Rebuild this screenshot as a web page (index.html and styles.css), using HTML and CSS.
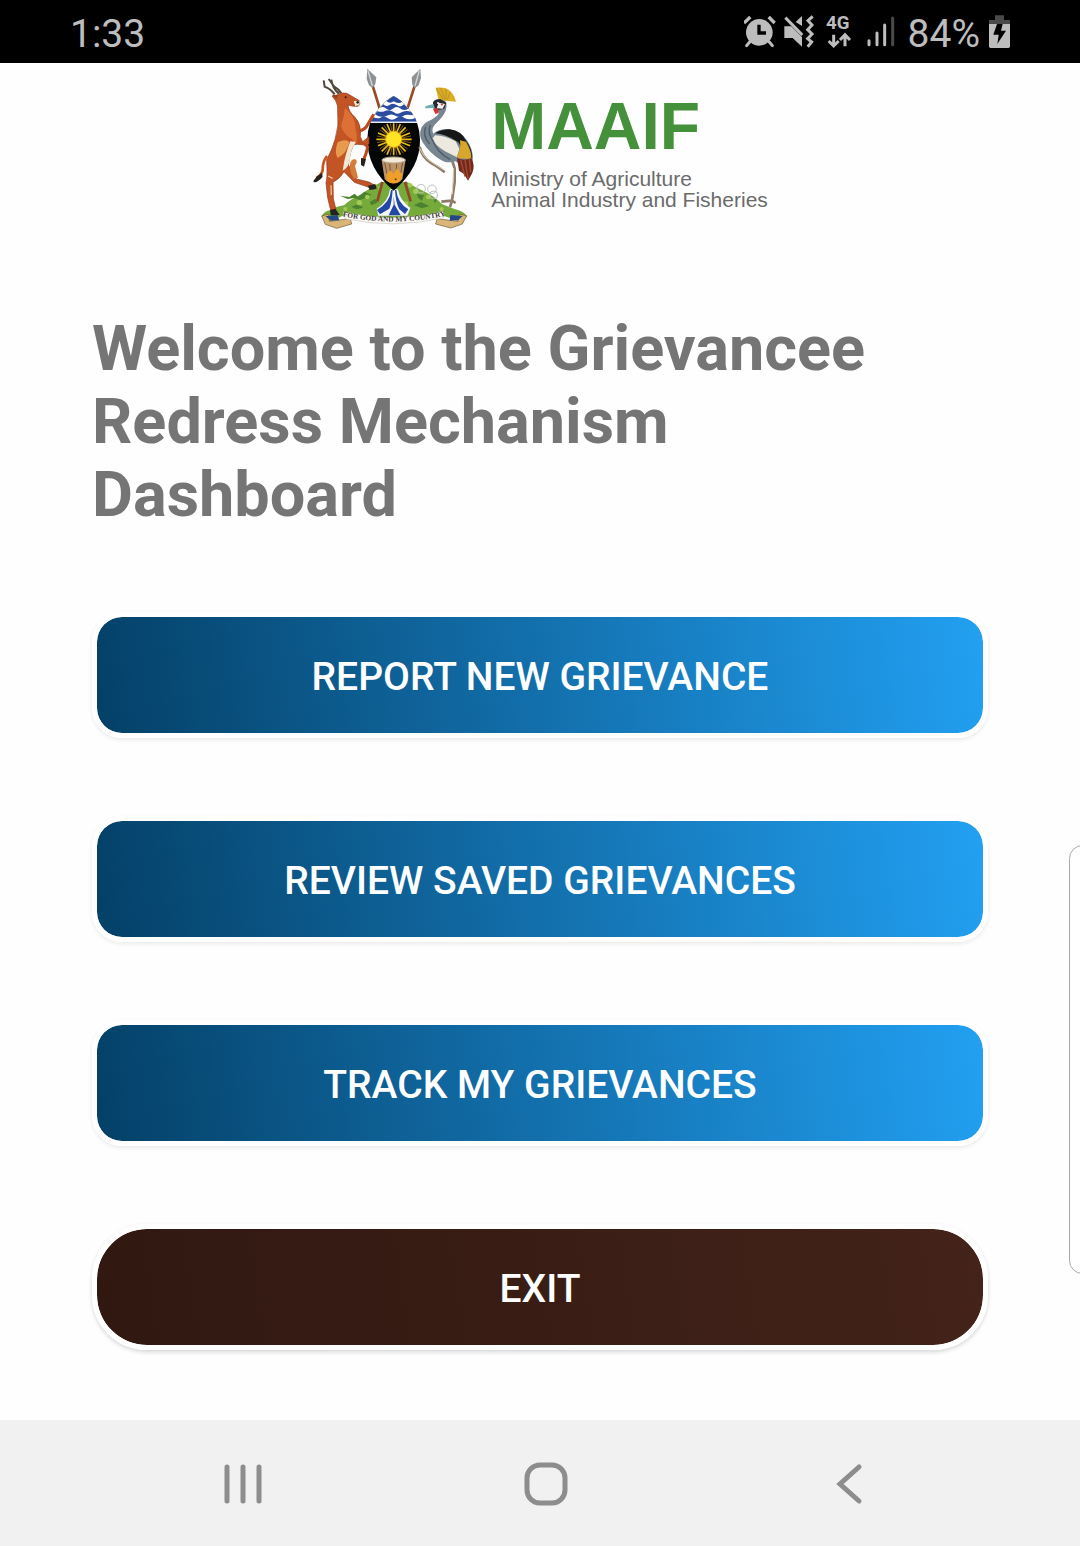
FILE: index.html
```html
<!DOCTYPE html>
<html lang="en">
<head>
<meta charset="utf-8">
<meta name="viewport" content="width=device-width, initial-scale=1">
<title>MAAIF Grievance Redress Mechanism</title>
<link rel="stylesheet" href="styles.css">
</head>
<body>
<div class="screen">
  <div class="status">
    <span class="status-text">1:33</span>
    <div class="status-icons">
      <svg width="32" height="63" viewBox="41 0 96 189" aria-hidden="true">
        <path d="M58 126L49 137M117 126L126 137" stroke="#bdbdbd" stroke-width="9" stroke-linecap="round"/>
        <path d="M41 69L60 51M115 51L133 69" stroke="#bdbdbd" stroke-width="10"/>
        <circle cx="87" cy="97" r="40" fill="#bdbdbd"/>
        <path d="M86 74V99H107" fill="none" stroke="#000" stroke-width="10"/>
      </svg>
      <svg width="32" height="63" viewBox="161 0 96 189" aria-hidden="true">
        <path d="M162 79H183L215 111V140L187 114H162ZM215 48V78L196 66Z" fill="#bdbdbd"/>
        <path d="M165 53L216 105" stroke="#bdbdbd" stroke-width="9"/>
        <path d="M247 49L233 62L245 75L232 89L245 102L232 116L244 126L232 140" fill="none" stroke="#bdbdbd" stroke-width="9"/>
      </svg>
      <svg width="28" height="63" viewBox="281 0 84 189" aria-label="4G">
        <text class="network" x="287" y="88">4G</text>
        <path d="M310 104V138M295 123L310 138L325 123M344 139V105M329 120L344 104L359 120" fill="none" stroke="#bdbdbd" stroke-width="9"/>
      </svg>
      <svg width="40" height="63" viewBox="389 0 120 189" aria-hidden="true">
        <path d="M416 122V134M440 99V134M463 75V134" stroke="#bdbdbd" stroke-width="9" stroke-linecap="round"/>
        <path d="M487 54V134" stroke="#4a4a4a" stroke-width="9" stroke-linecap="round"/>
      </svg>
      <span class="status-text">84%</span>
      <svg width="22" height="63" viewBox="774 0 66 189" aria-hidden="true">
        <path d="M795 46H822V60H840V74H777V60H795Z" fill="#4a4a4a"/>
        <path d="M777 72H840V139Q840 144 835 144H782Q777 144 777 139Z" fill="#bdbdbd"/>
        <path d="M801 72H818L813 92H828L802 132L806 104H790Z" fill="#000"/>
      </svg>
    </div>
  </div>

  <header class="brand">
    <svg class="emblem" width="190" height="174" viewBox="0 3 570 522" role="img" aria-label="Coat of arms of Uganda">
      <!-- spears -->
      <g stroke="#9a4a24" stroke-width="8">
        <path d="M216 65L247 165M346 65L316 160M247 360L232 418M315 360L332 418"/>
      </g>
      <path d="M202 20L229 46L226 66L218 78L207 70L200 50ZM361 20L335 46L337 68L344 79L356 70L363 48Z" fill="#8d9193"/>
      <path d="M204 26L217 72M358 26L345 72" stroke="#d4d7d8" stroke-width="4"/>

      <!-- mound -->
      <path d="M65 461Q74 446 94 444Q106 434 132 430Q150 413 184 397Q208 378 244 360H322Q346 378 375 389Q406 405 426 426Q458 440 480 446Q496 452 501 464L482 479L430 461Q280 488 132 460L82 482Z" fill="#76aa3b"/>
      <g fill="#4c8130">
        <path d="M120 401L148 405L164 395L174 405L193 389L214 398L196 408L180 414L162 408L143 411ZM350 395L372 400L366 416L355 408ZM209 420L226 410L232 422L214 430Z"/>
        <path d="M341 430L362 420L388 432L366 439ZM154 434L174 426L190 437L169 442ZM398 409L411 414L405 424Z"/>
      </g>
      <g fill="#a2ca56">
        <circle cx="202" cy="405" r="7"/><circle cx="178" cy="422" r="8"/><circle cx="347" cy="388" r="8"/>
        <circle cx="330" cy="370" r="7"/><circle cx="385" cy="405" r="7"/><circle cx="318" cy="425" r="7"/>
        <circle cx="136" cy="441" r="6"/><circle cx="425" cy="441" r="6"/><circle cx="240" cy="378" r="6"/>
      </g>
      <path d="M247 360L232 418M315 360L332 418" stroke="#934528" stroke-width="8"/>
      <g fill="none" stroke="#bfc4be" stroke-width="3">
        <circle cx="363" cy="380" r="13"/><circle cx="396" cy="382" r="13"/><circle cx="401" cy="399" r="12"/>
      </g>
      <!-- river -->
      <path d="M270 382H294Q299 415 331 438L322 461H235L230 440Q265 420 270 382Z" fill="#f5f7fb"/>
      <path d="M273 384Q271 420 231 444L240 457L268 440Q275 425 278 384ZM289 384Q292 422 325 442L315 456L298 442Q287 422 285 384ZM281 402V428L266 460H302L284 428Z" fill="#2347a5"/>

      <!-- scroll -->
      <path d="M65 462L86 456L88 478L151 470L155 486L110 499L76 487ZM500 461L478 457L474 478L411 470L407 486L452 498L487 486Z" fill="#d9b579" stroke="#6d592f" stroke-width="2"/>
      <path d="M76 463L94 476L118 475L112 459ZM488 462L474 475L449 476L451 459Z" fill="#234884"/>
      <path d="M130 450Q280 485 432 448L430 468Q280 502 135 470Z" fill="#fcfbf7" stroke="#c9c6bd" stroke-width="2"/>
      <path id="motto-line" d="M133 464Q281 494 432 462" fill="none"/>
      <text class="motto"><textPath href="#motto-line" startOffset="50%" text-anchor="middle">FOR GOD AND MY COUNTRY</textPath></text>

      <!-- shield -->
      <path d="M281 102Q311 119 331 146Q358 178 360 232Q362 317 281 386Q201 320 202 232Q203 180 231 146Q250 119 281 102Z" fill="#050606"/>
      <path d="M281 102Q311 119 331 146Q345 161 350 180H214Q220 160 231 146Q250 119 281 102Z" fill="#fff"/>
      <path d="M259 117Q270 108 281 102Q292 108 307 119Q295 127 281 118Q270 127 259 117ZM240 137L250 127Q260 137 272 127Q281 122 291 130Q302 138 312 127L325 140Q311 149 300 139Q290 131 281 139Q269 150 257 139Q249 132 240 137ZM225 157L232 148Q247 151 253 148Q266 141 281 150Q291 160 306 150Q319 144 333 149L340 160Q324 157 315 159Q300 171 283 160Q271 154 259 162Q242 169 225 157ZM216 174L220 166Q232 170 239 168Q252 160 263 168Q276 178 289 168Q303 159 315 169Q329 175 346 168L349 179H216Z" fill="#2c4c9f"/>
      <path d="M212 181H351" stroke="#e8edf5" stroke-width="4"/>
      <!-- sun -->
      <g stroke="#e9b81d" stroke-width="5">
        <path d="M281 184V280M229 232H335M245 196L317 268M245 268L317 196M261 186L301 278M301 186L261 278M234 213L330 251M234 251L330 213"/>
      </g>
      <g stroke="#b6871b" stroke-width="2">
        <path d="M271 184L291 280M291 184L271 280M231 222L333 242M231 242L333 222M252 190L310 274M310 190L252 274M239 203L323 261M239 261L323 203"/>
      </g>
      <circle cx="281" cy="232" r="24" fill="#fde425" stroke="#e8ac13" stroke-width="3"/>
      <!-- drum -->
      <path d="M245 293L254 352Q280 376 307 352L317 293Z" fill="#bd9366"/>
      <path d="M254 302L263 345M269 305L272 340M290 305L288 340M308 302L300 345" stroke="#765640" stroke-width="3"/>
      <path d="M259 336L270 325L281 337L291 319L306 337L302 357Q280 373 260 356Z" fill="#efa028"/>
      <ellipse cx="281" cy="294" rx="35" ry="9" fill="#f2ead9" stroke="#baa78d" stroke-width="3"/>
      <circle cx="287" cy="352" r="3" fill="#5f3d20"/>

      <!-- kob -->
      <path d="M104 97Q91 79 74 74L71 55M117 95Q98 82 94 53M124 94Q116 81 102 73L86 51" fill="none" stroke="#50483b" stroke-width="6"/>
      <path d="M107 101Q119 91 140 94Q155 102 178 116Q183 129 173 133Q158 134 144 129Q145 148 165 166Q185 187 181 224L188 239L207 224V247L187 248Q172 246 161 248L151 273L145 309Q159 325 169 351L207 360L224 370L222 382L198 373L163 361Q150 347 132 329Q122 348 99 361L100 410L108 443L93 449L83 407L78 363Q82 348 81 321L80 293Q96 265 105 233Q118 190 113 150Q115 130 107 116L96 102Z" fill="#c35424" stroke="#8b3519" stroke-width="2"/>
      <path d="M135 137Q167 165 166 200Q176 228 165 245L157 232Q131 218 123 191Q133 164 135 137Z" fill="#dd7135"/>
      <path d="M113 241Q137 229 148 240Q140 275 113 288Q102 270 113 241Z" fill="#e89a4f"/>
      <path d="M168 240Q151 265 150 288Q148 316 128 326L133 296Q142 260 151 238Z" fill="#f4e6d1"/>
      <path d="M150 306Q153 290 166 292Q175 297 165 311L174 347L162 350Q148 331 150 306Z" fill="#d57e3c"/>
      <path d="M81 282Q67 300 68 325Q64 340 49 348" fill="none" stroke="#c75320" stroke-width="8"/>
      <path d="M66 333Q44 345 40 360Q53 363 68 344Z" fill="#24211f"/>
      <path d="M176 207Q195 205 204 186L221 157M175 238Q194 244 203 255L198 275L190 295" fill="none" stroke="#bc4a20" stroke-width="9" stroke-linejoin="round"/>
      <path d="M183 288L198 291L192 314L183 309ZM204 371L226 366L230 380L209 384ZM90 444L106 440L119 459L92 460Z" fill="#242220"/>
      <path d="M161 117L179 117L178 129L166 132Z" fill="#f7eee3"/>
      <circle cx="137" cy="106" r="3" fill="#201b17"/><circle cx="173" cy="121" r="4" fill="#241f1d"/>
      <path d="M115 99L96 98L109 112Z" fill="#934522"/>
      <path d="M93 370L94 399M84 342L98 349" stroke="#eec392" stroke-width="4"/>

      <!-- crane -->
      <path d="M359 254Q365 285 395 304Q423 320 434 331M456 294L464 319V360L456 416M456 416L450 435M456 416L424 419M456 416L467 423" fill="none" stroke="#8d7c69" stroke-width="8" stroke-linejoin="round"/>
      <path d="M360 259Q369 286 399 303L430 323M461 318L457 397" fill="none" stroke="#dfcfb7" stroke-width="3"/>
      <path d="M406 117Q416 107 433 114Q444 124 437 146Q430 163 410 182Q391 198 400 215Q418 199 446 202Q483 207 501 235Q522 266 518 296L485 310L466 298Q439 307 417 290Q389 272 369 242Q355 221 364 197Q373 181 394 173Q415 163 417 151Q405 151 400 139Z" fill="#788692"/>
      <path d="M405 214Q427 201 449 202Q485 206 499 238Q517 261 516 289Q492 272 475 241Q436 215 405 214Z" fill="#171717"/>
      <path d="M405 220Q434 220 467 238L478 260L471 286Q449 275 435 268Q406 250 397 230Z" fill="#eee9df"/>
      <path d="M480 235L498 239Q516 268 514 291L476 289L470 282Q484 263 480 235Z" fill="#d7a62d"/>
      <path d="M471 288Q493 298 514 288Q526 311 517 333L504 356L492 336L477 326Z" fill="#71291f"/>
      <path d="M482 294L495 344M495 294L504 350M508 291L512 331" stroke="#a74c30" stroke-width="4"/>
      <path d="M397 231Q407 269 451 293M377 195Q366 221 389 246M391 189Q380 214 402 241" fill="none" stroke="#4c5c67" stroke-width="4"/>
      <path d="M407 77Q421 75 436 78Q461 88 468 119L434 116L415 110Z" fill="#d9ad27"/>
      <path d="M409 79L430 112M422 78L435 113M438 82L438 112M450 91L442 113" stroke="#ab851d" stroke-width="2"/>
      <path d="M399 121Q405 109 422 112L439 122L433 140L414 144L399 136Z" fill="#24292d"/>
      <path d="M401 126L377 132L375 139L404 138Z" fill="#71aeb6"/>
      <path d="M416 122L435 126L428 140L410 139Z" fill="#f5f1ec"/>
      <path d="M399 141L413 138L416 153L406 156ZM421 125L430 125L426 132Z" fill="#d63432"/>
      <circle cx="414" cy="123" r="3" fill="#fff"/>
    </svg>
    <div class="brand-text">
      <span class="brand-name">MAAIF</span>
      <span class="brand-sub">Ministry of Agriculture<br>Animal Industry and Fisheries</span>
    </div>
  </header>

  <main class="content">
    <h1 class="title">Welcome to the Grievancee Redress Mechanism Dashboard</h1>
    <div class="actions">
      <button class="action" type="button">REPORT NEW GRIEVANCE</button>
      <button class="action" type="button">REVIEW SAVED GRIEVANCES</button>
      <button class="action" type="button">TRACK MY GRIEVANCES</button>
      <button class="action action-exit" type="button">EXIT</button>
    </div>
  </main>

  <nav class="navbar" aria-label="System">
    <button class="nav-button" type="button" aria-label="Recent apps">
      <svg width="44" height="44" viewBox="0 0 44 44"><path d="M6 5V39M22 5V39M38 5V39" stroke="#8d8d8d" stroke-width="5" stroke-linecap="round"/></svg>
    </button>
    <button class="nav-button" type="button" aria-label="Home">
      <svg width="44" height="44" viewBox="0 0 44 44"><path d="M22 3C36 3 41 8 41 22S36 41 22 41S3 36 3 22S8 3 22 3Z" fill="none"/><rect x="3" y="3" width="38" height="38" rx="13" fill="none" stroke="#8d8d8d" stroke-width="5"/></svg>
    </button>
    <button class="nav-button" type="button" aria-label="Back">
      <svg width="44" height="44" viewBox="0 0 44 44"><path d="M32 5L13 22L32 39" fill="none" stroke="#8d8d8d" stroke-width="5" stroke-linecap="round"/></svg>
    </button>
  </nav>
  <div class="edge-handle"></div>
</div>
</body>
</html>
```
FILE: styles.css
```css
* {
  box-sizing: border-box;
}

body {
  margin: 0;
  background: #fefefe;
  font-family: Roboto, "Liberation Sans", sans-serif;
}

.screen {
  position: relative;
  display: flex;
  flex-direction: column;
  min-height: 100vh;
  overflow: hidden;
}

.status {
  display: flex;
  justify-content: space-between;
  align-items: center;
  padding: 0 70px;
  background: #000;
  color: #bdbdbd;
}

.status-icons {
  display: flex;
  align-items: center;
  gap: 8px;
}

.status-icons svg {
  display: block;
}

.status-text {
  padding-top: 4px;
  font-size: 39px;
  line-height: 46px;
}

.network {
  fill: #bdbdbd;
  font-size: 56px;
  font-weight: 700;
}

.brand {
  display: flex;
  justify-content: center;
}

.emblem {
  flex: none;
}

.motto {
  fill: #3c3a36;
  font-family: "Liberation Serif", serif;
  font-size: 22px;
  font-weight: 700;
}

.brand-text {
  display: flex;
  flex-direction: column;
  gap: 9px;
  padding: 30px 12px 0 1px;
  font-family: "Liberation Sans", sans-serif;
}

.brand-name {
  color: #45903a;
  font-size: 66px;
  font-weight: 700;
  line-height: 66px;
}

.brand-sub {
  color: #6b6b6b;
  font-size: 21px;
  line-height: 21px;
}

.content {
  flex: 1;
  padding: 75px 92px 70px;
}

.title {
  margin: 0;
  color: #757575;
  font-size: 63px;
  font-weight: 700;
  line-height: 73px;
}

.actions {
  display: flex;
  flex-direction: column;
  gap: 78px;
  margin-top: 81px;
}

.action {
  width: 100%;
  padding: 37px 20px 33px;
  border: 5px solid #fff;
  border-radius: 30px;
  background: linear-gradient(81deg, #044067, #22a0f2) padding-box;
  box-shadow: 0 2px 4px rgba(0, 0, 0, 0.08);
  color: #fff;
  font: 500 39px/46px Roboto, "Liberation Sans", sans-serif;
}

.action-exit {
  border-radius: 55px;
  background: linear-gradient(81deg, #301811, #43231a) padding-box;
  box-shadow: 0 2px 4px rgba(0, 0, 0, 0.16);
}

.navbar {
  display: grid;
  grid-template-columns: repeat(3, 1fr);
  padding: 0 80px 0 92px;
  background: #f1f1f1;
}

.nav-button {
  display: flex;
  justify-content: center;
  padding: 42px 0 40px;
  border: 0;
  background: none;
}

.edge-handle {
  position: absolute;
  top: 845px;
  right: -16px;
  width: 27px;
  height: 429px;
  border: 1px solid #a8a8a8;
  border-radius: 16px;
  background: #fff;
}
```
